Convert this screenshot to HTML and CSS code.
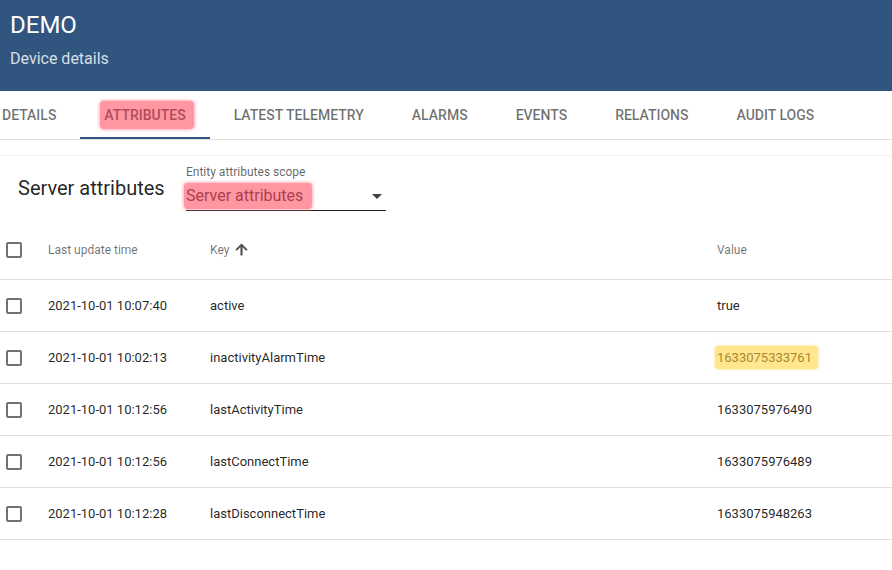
FILE: index.html
```html
<!DOCTYPE html>
<html>
<head>
<meta charset="utf-8">
<link rel="stylesheet" href="styles.css">
</head>
<body>
<header class="head">
  <div class="title">DEMO</div>
  <div class="subtitle">Device details</div>
</header>
<nav class="tabbar">
  <div class="tabs">
    <div class="tab">DETAILS</div>
    <div class="tab active"><span class="mark-pink">ATTRIBUTES</span></div>
    <div class="tab">LATEST TELEMETRY</div>
    <div class="tab">ALARMS</div>
    <div class="tab">EVENTS</div>
    <div class="tab">RELATIONS</div>
    <div class="tab">AUDIT LOGS</div>
  </div>
</nav>
<section class="card">
  <div class="toolbar">
    <div class="card-title">Server attributes</div>
    <div class="select">
      <div class="select-label">Entity attributes scope</div>
      <div class="select-field">
        <span class="mark-pink select-value">Server attributes</span>
        <span class="arrow"></span>
      </div>
    </div>
  </div>
  <div class="table">
    <div class="row header">
      <div class="cell cb"><span class="box"></span></div>
      <div class="cell">Last update time</div>
      <div class="cell key-head">Key
        <svg class="sort" viewBox="0 0 24 24" width="17" height="17"><path d="M4 12l1.41 1.41L11 7.83V20h2V7.83l5.58 5.59L20 12l-8-8-8 8z" fill="#4a4a4a" stroke="#4a4a4a" stroke-width="0.8"/></svg>
      </div>
      <div class="cell">Value</div>
    </div>
    <div class="row">
      <div class="cell cb"><span class="box"></span></div>
      <div class="cell">2021-10-01 10:07:40</div>
      <div class="cell">active</div>
      <div class="cell">true</div>
    </div>
    <div class="row">
      <div class="cell cb"><span class="box"></span></div>
      <div class="cell">2021-10-01 10:02:13</div>
      <div class="cell">inactivityAlarmTime</div>
      <div class="cell"><span class="mark-yellow">1633075333761</span></div>
    </div>
    <div class="row">
      <div class="cell cb"><span class="box"></span></div>
      <div class="cell">2021-10-01 10:12:56</div>
      <div class="cell">lastActivityTime</div>
      <div class="cell">1633075976490</div>
    </div>
    <div class="row">
      <div class="cell cb"><span class="box"></span></div>
      <div class="cell">2021-10-01 10:12:56</div>
      <div class="cell">lastConnectTime</div>
      <div class="cell">1633075976489</div>
    </div>
    <div class="row">
      <div class="cell cb"><span class="box"></span></div>
      <div class="cell">2021-10-01 10:12:28</div>
      <div class="cell">lastDisconnectTime</div>
      <div class="cell">1633075948263</div>
    </div>
  </div>
</section>
</body>
</html>
```

FILE: styles.css
```css
* { box-sizing: border-box; }
html, body { margin: 0; padding: 0; }
body {
  font-family: Roboto, "Noto Sans", "Liberation Sans", sans-serif;
  background: #fff;
  color: rgba(0,0,0,0.87);
  width: 892px;
  height: 570px;
  overflow: hidden;
}
.head {
  height: 91px;
  background: #305680;
  padding: 10px 10px 0;
  color: #fff;
}
.title {
  font-size: 24px;
  line-height: 30px;
  height: 30px;
}
.subtitle {
  margin-top: 8px;
  font-size: 16px;
  line-height: 22px;
  color: rgba(255,255,255,0.82);
}
.tabbar {
  height: 49px;
  border-bottom: 1px solid #e0e0e0;
  overflow: hidden;
}
.tabs {
  display: flex;
  margin-left: -22px;
  height: 48px;
}
.tab {
  height: 48px;
  padding: 0 24px;
  display: flex;
  align-items: center;
  font-size: 14px;
  font-weight: 500;
  color: rgba(0,0,0,0.56);
  white-space: nowrap;
  flex: none;
}
.tab.active {
  border-bottom: 2px solid #305680;
  padding-top: 2px;
}
.mark-pink {
  background: #ff97a3;
  box-shadow: 0 0 3px 1px rgba(255,140,155,0.7);
  border-radius: 4px;
  color: #b04d5b;
}
.tab .mark-pink {
  padding: 6px 8px 6px 4px;
  margin: 0 -8px 0 -4px;
}
.card {
  margin-top: 15px;
  border-top: 1px solid #f1f1f1;
}
.toolbar {
  height: 68px;
  display: flex;
  align-items: flex-start;
  padding: 0 0 0 18px;
}
.card-title {
  font-size: 20px;
  line-height: 24px;
  margin-top: 20px;
  width: 168px;
  flex: none;
}
.select {
  width: 200px;
  padding-top: 9px;
}
.select-label {
  font-size: 12px;
  line-height: 14px;
  color: rgba(0,0,0,0.62);
}
.select-field {
  margin-top: 2px;
  height: 30px;
  border-bottom: 1px solid rgba(0,0,0,0.87);
  display: flex;
  align-items: center;
  justify-content: space-between;
}
.select-value {
  font-size: 16px;
  line-height: 20px;
  padding: 3px 9px 3px 2px;
  margin-left: -2px;
  color: #b03d4e;
}
.arrow {
  width: 0; height: 0;
  border-left: 5px solid transparent;
  border-right: 5px solid transparent;
  border-top: 5px solid rgba(0,0,0,0.75);
  margin-right: 4px;
  margin-top: 1px;
}
.table { display: flex; flex-direction: column; }
.row {
  display: grid;
  grid-template-columns: 48px 162px 507px 1fr;
  height: 52px;
  border-bottom: 1px solid #e0e0e0;
  align-items: center;
  font-size: 13px;
  color: rgba(0,0,0,0.87);
}
.row.header {
  height: 56px;
  font-size: 12px;
  color: rgba(0,0,0,0.56);
  padding-bottom: 4px;
}
.cell { display: flex; align-items: center; white-space: nowrap; }
.cb { padding-left: 6px; }
.box {
  width: 16px; height: 16px;
  border: 2px solid #727272;
  border-radius: 2px;
  display: block;
}
.row .cb .box { margin-top: 1px; }
.key-head { gap: 4px; }
.sort { display: block; }
.mark-yellow {
  background: #ffe68f;
  box-shadow: 0 0 2px 1px rgba(255,225,130,0.6);
  border-radius: 4px;
  padding: 4px 6px 4px 2px;
  margin-left: -2px;
  color: #a8892f;
}
```
